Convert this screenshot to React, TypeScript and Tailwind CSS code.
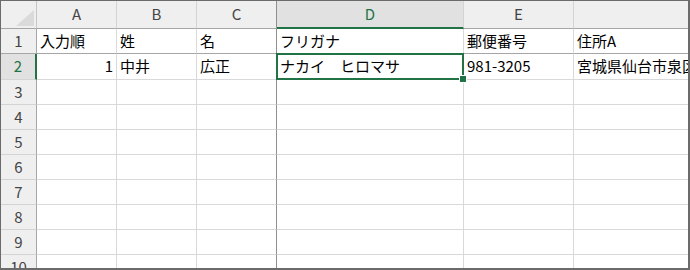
import React from "react";

const font = { fontFamily: '"Noto Sans CJK JP", "Noto Sans", sans-serif' };

type Col = { id: string; w: string };

const cols: Col[] = [
  { id: "A", w: "w-[80px]" },
  { id: "B", w: "w-[80px]" },
  { id: "C", w: "w-[80px]" },
  { id: "D", w: "w-[187px]" },
  { id: "E", w: "w-[110px]" },
  { id: "F", w: "w-[250px]" },
];

const data: Record<number, { text: string; right?: boolean }[]> = {
  1: [
    { text: "入力順" },
    { text: "姓" },
    { text: "名" },
    { text: "フリガナ" },
    { text: "郵便番号" },
    { text: "住所A" },
  ],
  2: [
    { text: "1", right: true },
    { text: "中井" },
    { text: "広正" },
    { text: "ナカイ　ヒロマサ" },
    { text: "981-3205" },
    { text: "宮城県仙台市泉区" },
  ],
};

function CornerCell() {
  return (
    <div className="w-[36px] h-[28px] shrink-0 bg-[#efefef] border-r border-b border-r-[#c6c6c6] border-b-[#a6a6a6] flex items-end justify-end pr-[2px] pb-[2px]">
      <svg width="18" height="16" viewBox="0 0 18 16">
        <polygon points="18,0 18,16 0,16" fill="#dadada" />
      </svg>
    </div>
  );
}

function HeaderRow() {
  return (
    <div className="flex shrink-0">
      <CornerCell />
      {cols.map((c) => {
        const sel = c.id === "D";
        return (
          <div
            key={c.id}
            className={
              "h-[28px] shrink-0 flex items-center justify-center text-[15px] " +
              c.w +
              (sel
                ? " bg-[#e1e1e1] border-b-2 border-b-[#217346] text-[#217346]"
                : " bg-[#efefef] border-b border-b-[#a6a6a6] text-[#444444]") +
              (c.id === "C" ? " border-r border-r-[#8f8f8f]" : " border-r border-r-[#d4d4d4]")
            }
          >
            {c.id === "F" ? "" : c.id}
          </div>
        );
      })}
    </div>
  );
}

function Row({ n }: { n: number }) {
  const sel = n === 2;
  const h = n === 2 ? "h-[26px]" : "h-[25px]";
  const bottom = n === 1 ? "border-b-[#a6a6a6]" : "border-b-[#d9d9d9]";
  const cells = data[n];
  return (
    <div className="flex shrink-0">
      <div
        className={
          "w-[36px] shrink-0 flex items-center justify-center text-[15px] border-b " +
          h +
          " " +
          (n === 1 ? "border-b-[#a6a6a6]" : "border-b-[#d4d4d4]") +
          (sel
            ? " bg-[#e1e1e1] border-r-2 border-r-[#217346] text-[#217346]"
            : " bg-[#efefef] border-r border-r-[#a6a6a6] text-[#444444]")
        }
      >
        {n}
      </div>
      {cols.map((c, i) => {
        const cell = cells ? cells[i] : undefined;
        return (
          <div
            key={c.id}
            className={
              "shrink-0 flex items-center px-[3px] text-[15px] text-black whitespace-nowrap overflow-hidden border-b " +
              h +
              " " +
              c.w +
              " " +
              bottom +
              (c.id === "C" ? " border-r border-r-[#8f8f8f]" : " border-r border-r-[#d9d9d9]") +
              (cell?.right ? " justify-end" : "")
            }
          >
            {cell?.text}
          </div>
        );
      })}
    </div>
  );
}

export default function App() {
  return (
    <div
      className="relative w-[690px] h-[270px] bg-white border-t border-l border-r-2 border-b-2 border-[#6b6b6b] overflow-hidden flex flex-col"
      style={font}
    >
      <HeaderRow />
      {[1, 2, 3, 4, 5, 6, 7, 8, 9, 10].map((n) => (
        <Row key={n} n={n} />
      ))}

      {/* active cell D2 */}
      <div className="absolute left-[275px] top-[52px] w-[188px] h-[27px] border-2 border-[#217346]" />
      {/* fill handle */}
      <div className="absolute left-[458px] top-[74px] w-[8px] h-[8px] bg-[#217346] border border-white" />
    </div>
  );
}
